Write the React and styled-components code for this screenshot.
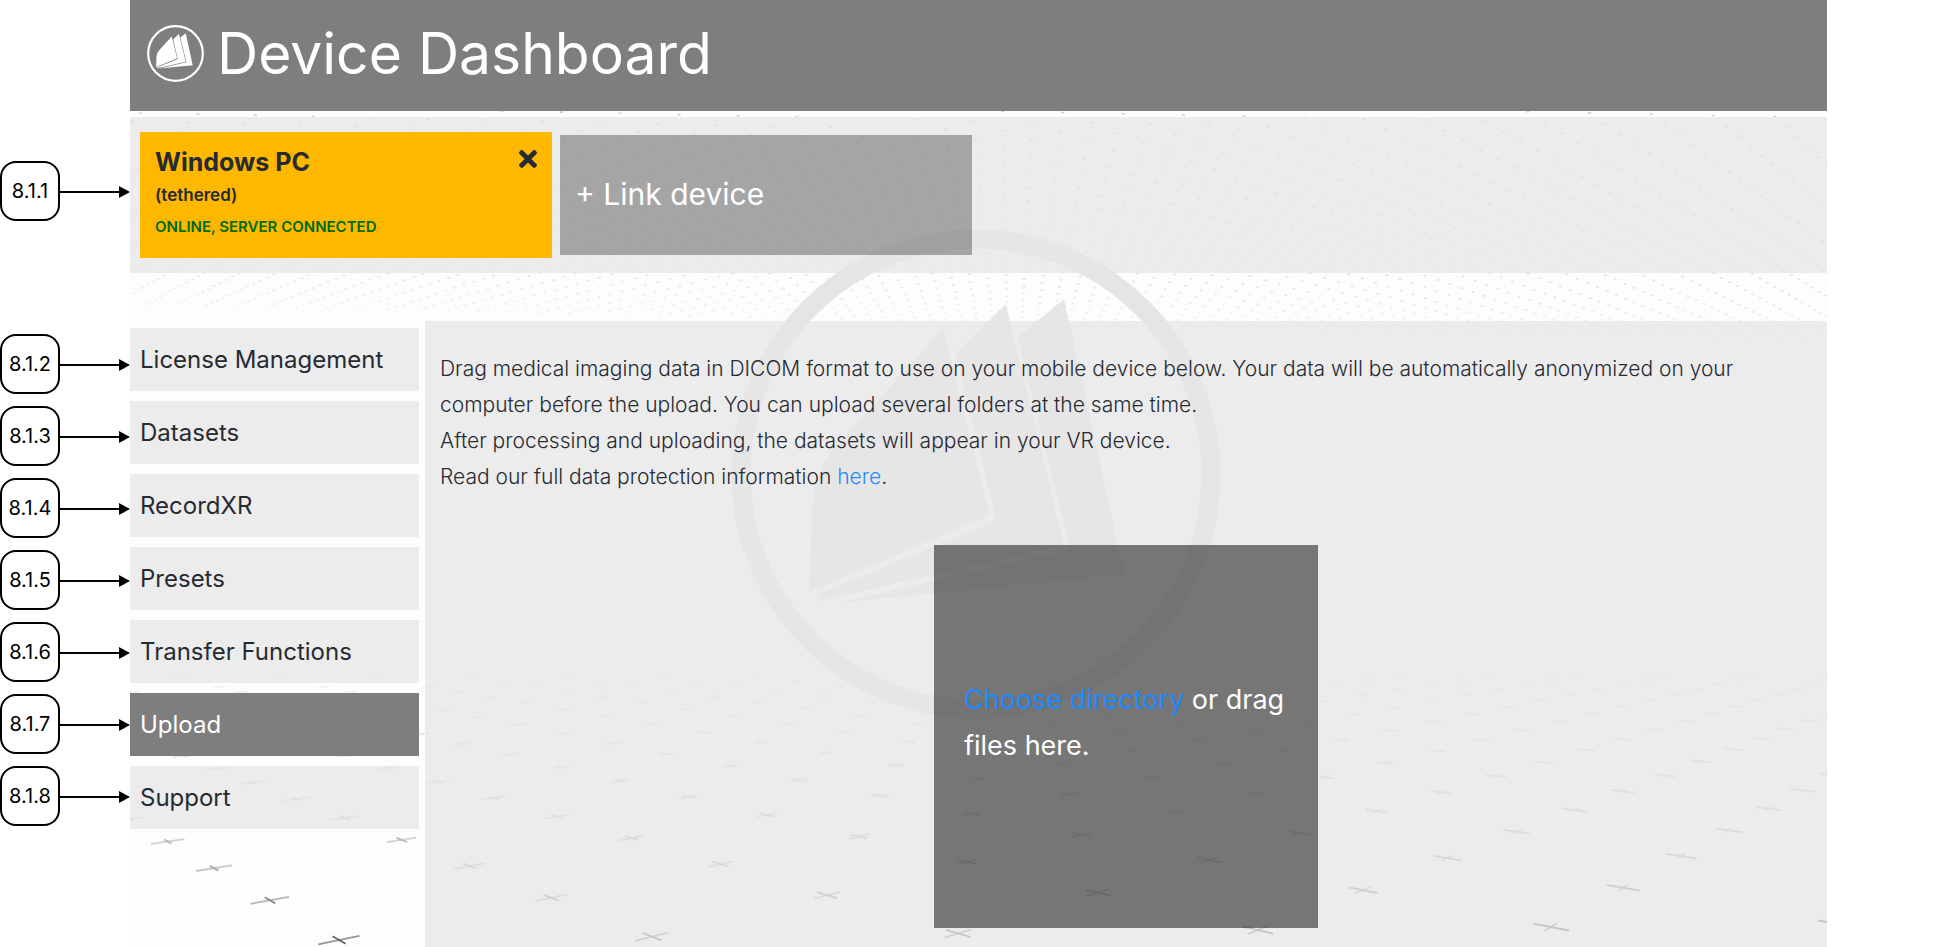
import React, { useState } from "react";
import styled, { createGlobalStyle } from "styled-components";
import { FaTimes } from "react-icons/fa";

const GlobalStyle = createGlobalStyle`
	*, *::before, *::after {
		box-sizing: border-box;
	}
	body {
		margin: 0;
		background: #ffffff;
		color: #262b33;
		font-family: Inter, "Liberation Sans", sans-serif;
	}
	h1, h2, p, ul {
		margin: 0;
		padding: 0;
	}
	button {
		font: inherit;
		color: inherit;
		border: 0;
		padding: 0;
		background: none;
		cursor: pointer;
	}
`;

const Page = styled.div`
	display: flex;
	min-height: 100vh;
`;

const CalloutColumn = styled.aside`
	flex: 0 0 130px;
	display: flex;
	flex-direction: column;
	gap: 113px;
	padding-top: 161px;
`;

const CalloutGroup = styled.ul`
	display: flex;
	flex-direction: column;
	gap: 12px;
	list-style: none;
`;

const CalloutRow = styled.li`
	display: flex;
	align-items: center;
	color: #000000;

	> span {
		width: 60px;
		height: 60px;
		border: 2px solid #000000;
		border-radius: 16px;
		font-size: 20px;
		line-height: 56px;
		text-align: center;
	}
`;

const Dashboard = styled.div`
	position: relative;
	flex: 1;
	min-width: 0;
	margin-right: 130px;
	display: flex;
	flex-direction: column;
	background: #fdfdfd;
	isolation: isolate;
`;

const Backdrop = styled.svg`
	position: absolute;
	inset: 0;
	width: 100%;
	height: 100%;
	z-index: -1;
`;

const Header = styled.header`
	display: flex;
	align-items: center;
	gap: 13px;
	height: 111px;
	padding: 0 17px 4px;
	background: #7e7e7e;
	color: #ffffff;

	h1 {
		font-size: 57px;
		font-weight: 400;
		line-height: 70px;
	}
`;

const DeviceBar = styled.section`
	display: flex;
	align-items: center;
	gap: 8px;
	margin-top: 6px;
	padding: 15px 10px;
	background: rgba(230, 230, 230, 0.75);
`;

const DeviceCard = styled.article`
	display: flex;
	justify-content: space-between;
	align-items: flex-start;
	width: 412px;
	height: 126px;
	padding: 14px 15px;
	background: #ffb700;

	h2 {
		font-size: 25px;
		font-weight: 700;
		line-height: 32px;
	}
	p {
		font-size: 17px;
		font-weight: 600;
		line-height: 34px;
	}
`;

const DeviceStatus = styled.p`
	&& {
		color: #006b10;
		font-size: 15px;
		line-height: 30px;
	}
`;

const RemoveButton = styled.button`
	display: flex;

	svg {
		width: 18px;
		height: 26px;
	}
`;

const LinkDeviceButton = styled.button`
	width: 412px;
	height: 120px;
	padding: 0 15px 2px;
	background: rgba(0, 0, 0, 0.3);
	color: #ffffff;
	font-size: 30px;
	text-align: left;
`;

const Body = styled.div`
	flex: 1;
	display: grid;
	grid-template-columns: 289px 1fr;
	gap: 6px;
	margin-top: 48px;
`;

const Sidebar = styled.nav`
	display: flex;
	flex-direction: column;
	gap: 10px;
	padding-top: 7px;
`;

const SidebarLink = styled.a`
	padding: 0 10px;
	font-size: 24px;
	line-height: 63px;
	text-decoration: none;
	color: ${(props) => (props.$active ? "#ffffff" : "#262b33")};
	background: ${(props) =>
		props.$active ? "#7e7e7e" : "rgba(230, 230, 230, 0.75)"};
`;

const UploadPanel = styled.main`
	display: flex;
	flex-direction: column;
	gap: 50px;
	padding: 30px 15px 19px;
	background: rgba(230, 230, 230, 0.75);
`;

const UploadText = styled.div`
	font-size: 21px;
	font-weight: 300;
	line-height: 36px;

	a {
		color: #1e88ff;
		text-decoration: none;
	}
`;

const DropZone = styled.div`
	display: flex;
	align-items: center;
	align-self: center;
	width: 384px;
	height: 383px;
	padding: 0 30px 28px;
	background: rgba(0, 0, 0, 0.5);
	color: #ffffff;
	font-size: 27px;
	line-height: 46px;

	button {
		color: #1e88ff;
	}
`;

const Logo = ({ size, ...rest }) => (
	<svg width={size} height={size} viewBox="0 0 490 490" {...rest}>
		<circle cx="245" cy="245" r="235" fill="none" stroke="currentColor" strokeWidth="19" />
		<g fill="currentColor">
			<path d="M212 99L259 286L78 363L82 272Q84 245 101 222Z" />
			<path d="M275 75L282 106L333 316L88 372V365L265 292L225 124Z" />
			<path d="M333 70L393 345L107 374L339 321L287 108Z" />
		</g>
	</svg>
);

const Arrow = () => (
	<svg width="70" height="14" viewBox="0 0 70 14" aria-hidden="true">
		<path d="M0 8H60" stroke="#000000" strokeWidth="2" />
		<path d="M59 2L70 8L59 14Z" />
	</svg>
);

// Projects a cell of the floor grid onto the backdrop
const floorPoint = (i, j) => {
	const w = 1 + 0.01112 * i + 0.1166 * j;
	const x = (320.25 * i - 37.5 * j + 339) / w;
	const y = (7.06 * i + 65.3 * j + 940) / w;
	return `${x.toFixed(1)} ${y.toFixed(1)}`;
};

const ceilingPoint = (i, j) => {
	const w = 1 + 0.0243 * j;
	const x = (60.3 * i + 54.7 * j + 1182) / w;
	const y = (1.25 * i + 13.6 * j + 115) / w;
	return `${x.toFixed(1)} ${y.toFixed(1)}`;
};

const range = (from, to) =>
	Array.from({ length: to - from }, (_, index) => from + index);

const floorRows = range(-1, 20).map((j) => ({
	j,
	opacity: Math.max(0.04, 0.9 / (1 + 0.4 * Math.max(j, 0)) - 0.06),
	wide: range(0, 30)
		.map((i) => `M${floorPoint(i - 0.087, j - 0.09)}L${floorPoint(i + 0.087, j + 0.09)}`)
		.join(""),
	deep: range(0, 30)
		.map((i) => `M${floorPoint(i, j - 0.085)}L${floorPoint(i, j + 0.085)}`)
		.join(""),
}));

const ceilingRows = range(-8, 42).map((j) => ({
	j,
	opacity: 0.26 - 0.0042 * (j + 8),
	dots: range(-56, 26)
		.map((i) => `M${ceilingPoint(i, j)}h3`)
		.join(""),
}));

const DashboardBackdrop = () => (
	<Backdrop
		viewBox="130 0 1697 947"
		preserveAspectRatio="xMidYMin slice"
		aria-hidden="true"
	>
		<g fill="none" stroke="#333333">
			{ceilingRows.map((row) => (
				<path key={row.j} d={row.dots} opacity={row.opacity} strokeWidth="1.6" />
			))}
			{floorRows.map((row) => (
				<g key={row.j} opacity={row.opacity} strokeWidth="1.8">
					<path d={row.wide} opacity="0.6" />
					<path d={row.deep} opacity="0.9" />
				</g>
			))}
		</g>
		<Logo size={490} x="731" y="229" color="#e5e5e5" />
	</Backdrop>
);

const Callout = ({ label }) => (
	<CalloutRow>
		<span>{label}</span>
		<Arrow />
	</CalloutRow>
);

const menuItems = [
	"License Management",
	"Datasets",
	"RecordXR",
	"Presets",
	"Transfer Functions",
	"Upload",
	"Support",
];

const App = () => {
	const [active, setActive] = useState("Upload");

	return (
		<Page>
			<GlobalStyle />
			<CalloutColumn>
				<CalloutGroup>
					<Callout label="8.1.1" />
				</CalloutGroup>
				<CalloutGroup>
					{menuItems.map((item, index) => (
						<Callout key={item} label={`8.1.${index + 2}`} />
					))}
				</CalloutGroup>
			</CalloutColumn>
			<Dashboard>
				<DashboardBackdrop />
				<Header>
					<Logo size={57} aria-hidden="true" />
					<h1>Device Dashboard</h1>
				</Header>
				<DeviceBar>
					<DeviceCard>
						<div>
							<h2>Windows PC</h2>
							<p>(tethered)</p>
							<DeviceStatus>ONLINE, SERVER CONNECTED</DeviceStatus>
						</div>
						<RemoveButton aria-label="Remove device">
							<FaTimes />
						</RemoveButton>
					</DeviceCard>
					<LinkDeviceButton>+ Link device</LinkDeviceButton>
				</DeviceBar>
				<Body>
					<Sidebar>
						{menuItems.map((item) => (
							<SidebarLink
								key={item}
								href="#"
								$active={item === active}
								onClick={() => setActive(item)}
							>
								{item}
							</SidebarLink>
						))}
					</Sidebar>
					<UploadPanel>
						<UploadText>
							<p>
								Drag medical imaging data in DICOM format to use on your mobile
								device below. Your data will be automatically anonymized on your
								computer before the upload. You can upload several folders at
								the same time.
							</p>
							<p>
								After processing and uploading, the datasets will appear in your
								VR device.
							</p>
							<p>
								Read our full data protection information <a href="#">here</a>.
							</p>
						</UploadText>
						<DropZone>
							<p>
								<button>Choose directory</button> <span>or drag</span>{" "}
								<span>files here.</span>
							</p>
						</DropZone>
					</UploadPanel>
				</Body>
			</Dashboard>
		</Page>
	);
};

export default App;
